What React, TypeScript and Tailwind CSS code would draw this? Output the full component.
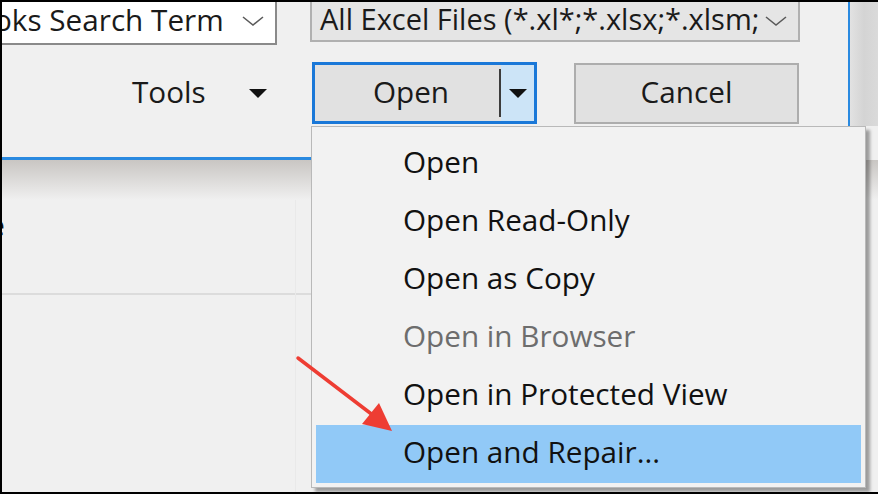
import React from "react";

const font = { fontFamily: '"Open Sans", "Noto Sans", Arial, sans-serif' };

function Chevron({ className }: { className?: string }) {
  return (
    <svg className={className} width="24" height="12" viewBox="0 0 24 12">
      <path d="M2 2 L12 10 L22 2" fill="none" stroke="#5a5a5a" strokeWidth="1.6" />
    </svg>
  );
}

function Triangle({ className }: { className?: string }) {
  return (
    <svg className={className} width="18" height="9" viewBox="0 0 18 9">
      <path d="M0 0 L18 0 L9 9 Z" fill="#111" />
    </svg>
  );
}

export default function App() {
  const items = [
    { t: "Open", c: "text-[#111]" },
    { t: "Open Read-Only", c: "text-[#111]" },
    { t: "Open as Copy", c: "text-[#111]" },
    { t: "Open in Browser", c: "text-[#6d6d6d]" },
    { t: "Open in Protected View", c: "text-[#111]" },
    { t: "Open and Repair...", c: "text-[#111]", hl: true },
  ];
  return (
    <div
      style={font}
      className="relative w-[878px] h-[494px] overflow-hidden bg-[#f0f0f0] border-l-2 border-t-2 border-b-2 border-black box-border flex flex-col"
    >
      {/* top row: dialog + outside strip */}
      <div className="flex h-[158px]">
        <div className="w-[848px] h-[158px] border-r-2 border-b-[3px] border-[#2a8ae0] bg-[#f0f0f0] flex flex-col box-border">
          {/* row 1 */}
          <div className="flex h-[43px]">
            <div className="w-[275px] h-[43px] bg-white border-r-2 border-b-2 border-[#8a8a8a] flex items-center overflow-hidden box-border">
              <span className="text-[29.7px] leading-none text-[#1a1a1a] whitespace-nowrap ml-[-8px] mt-[-6px]">
                oks Search Term
              </span>
              <Chevron className="ml-auto mr-[10px] mt-[-4px] shrink-0" />
            </div>
            <div className="ml-[33px] w-[490px] h-[40px] bg-[#e5e5e5] border-2 border-t-0 border-[#b0b0b0] flex items-center overflow-hidden box-border">
              <span className="text-[29px] leading-none text-[#1a1a1a] whitespace-nowrap ml-[8px] mt-[-6px]">
                All Excel Files (*.xl*;*.xlsx;*.xlsm;
              </span>
              <Chevron className="ml-auto mr-[10px] shrink-0" />
            </div>
          </div>
          {/* row 2 */}
          <div className="flex mt-[17px] h-[62px] items-center">
            <div className="w-[310px] flex items-center">
              <span className="ml-[130px] mt-[-3px] text-[29.7px] leading-none text-[#1a1a1a]">Tools</span>
              <Triangle className="ml-[43px] mt-[2px]" />
            </div>
            <div className="w-[225px] h-[62px] border-[3px] border-[#1a78d8] flex box-border">
              <div className="flex-1 bg-[#e1e1e1] flex items-center justify-center">
                <span className="text-[29.7px] leading-none text-[#1a1a1a] ml-[8px] mt-[-3px]">Open</span>
              </div>
              <div className="w-[2px] bg-[#e1e1e1] flex items-center">
                <div className="w-[2px] h-[48px] bg-[#3c3c3c]" />
              </div>
              <div className="w-[33px] bg-[#cce4f7] flex items-center justify-center">
                <Triangle />
              </div>
            </div>
            <div className="ml-[37px] w-[225px] h-[61px] border-2 border-[#adadad] bg-[#e1e1e1] flex items-center justify-center box-border">
              <span className="text-[29.7px] leading-none text-[#1a1a1a] mt-[-3px]">Cancel</span>
            </div>
          </div>
        </div>
        <div className="flex-1 h-[124px] bg-gradient-to-r from-[#e2e2e2] via-[#d4d4d4] to-[#dadada]" />
      </div>

      {/* below-dialog area */}
      <div className="h-[40px] bg-gradient-to-b from-[#c9c6c3] to-[#f0f0f0]" />
      <div className="relative flex-1">
        <div className="w-[310px] h-[95px] border-b-2 border-[#dcdcdc] flex items-start">
          <span className="ml-[-14px] mt-[10px] text-[29px] leading-none text-[#111] font-semibold">e</span>
        </div>
        <div className="absolute left-[293px] top-0 bottom-0 w-px bg-[#e9e9e9]" />
      </div>

      {/* dropdown menu (overlay) */}
      <div className="absolute left-[309px] top-[124px] w-[555px] h-[362px] bg-[#f2f2f2] border border-[#b9b9b9] shadow-[4px_4px_3px_rgba(0,0,0,0.35)] pt-[8px] px-[4px] box-border">
        {items.map((it) => (
          <div
            key={it.t}
            className={`h-[58px] flex items-center pl-[87px] ${it.hl ? "bg-[#91c9f7]" : ""}`}
          >
            <span className={`text-[29.7px] leading-none whitespace-nowrap mt-[-4px] ${it.c}`}>{it.t}</span>
          </div>
        ))}
      </div>

      {/* red arrow (overlay) */}
      <svg className="absolute left-0 top-0" width="878" height="494" viewBox="0 0 878 494" style={{ pointerEvents: "none" }}>
        <line x1="296" y1="356" x2="372" y2="414" stroke="#ee3d33" strokeWidth="3.5" strokeLinecap="round" />
        <path d="M390 429 L360 422 L377 401 Z" fill="#ee3d33" />
      </svg>
    </div>
  );
}
